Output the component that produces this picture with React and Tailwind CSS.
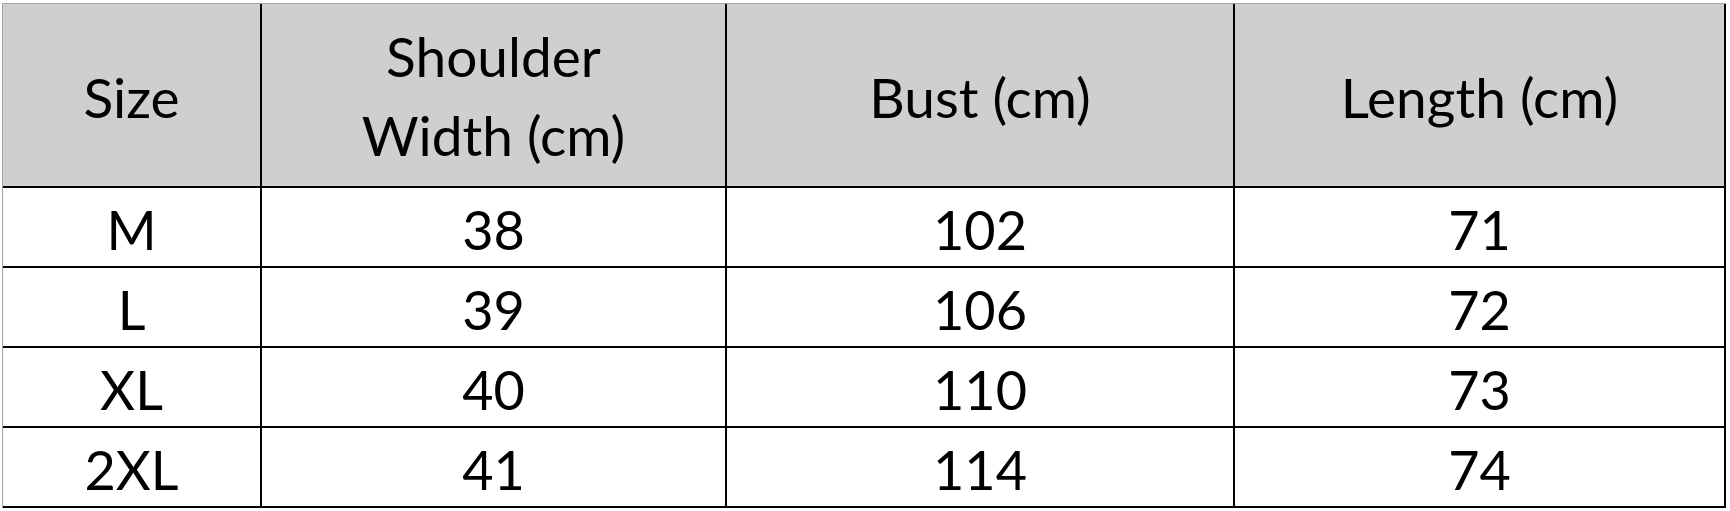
import React from "react";

const cols = ["w-[259px]", "w-[465px]", "w-[508px]", "w-[491px]"];

const rows = [
  ["M", "38", "102", "71"],
  ["L", "39", "106", "72"],
  ["XL", "40", "110", "73"],
  ["2XL", "41", "114", "74"],
];

export default function App() {
  return (
    <div
      className="w-[1730px] h-[511px] bg-white pl-[2px] pt-[3px] text-black"
      style={{ fontFamily: "Lato, 'Open Sans', sans-serif" }}
    >
      <div className="w-fit border-l border-t border-[#a3a3a3]">
        <div className="flex h-[184px] bg-[#d0cece] border-b-2 border-black">
          <div className={`${cols[0]} border-r-2 border-black flex items-center justify-center text-[55px] leading-[74px] pt-[4px]`}>
            Size
          </div>
          <div className={`${cols[1]} border-r-2 border-black flex items-center justify-center text-center text-[55px] leading-[79px] pt-[1px]`}>
            <span>
              Shoulder
              <br />
              Width (cm)
            </span>
          </div>
          <div className={`${cols[2]} border-r-2 border-black flex items-center justify-center text-[55px] leading-[74px] pt-[4px]`}>
            Bust (cm)
          </div>
          <div className={`${cols[3]} border-r-2 border-black flex items-center justify-center text-[55px] leading-[74px] pt-[4px]`}>
            Length (cm)
          </div>
        </div>
        {rows.map((r, i) => (
          <div key={i} className="flex h-[80px] border-b-2 border-black">
            {r.map((c, j) => (
              <div
                key={j}
                className={`${cols[j]} border-r-2 border-black flex items-center justify-center text-[54px] leading-none pt-[6px]`}
              >
                {c}
              </div>
            ))}
          </div>
        ))}
      </div>
    </div>
  );
}
